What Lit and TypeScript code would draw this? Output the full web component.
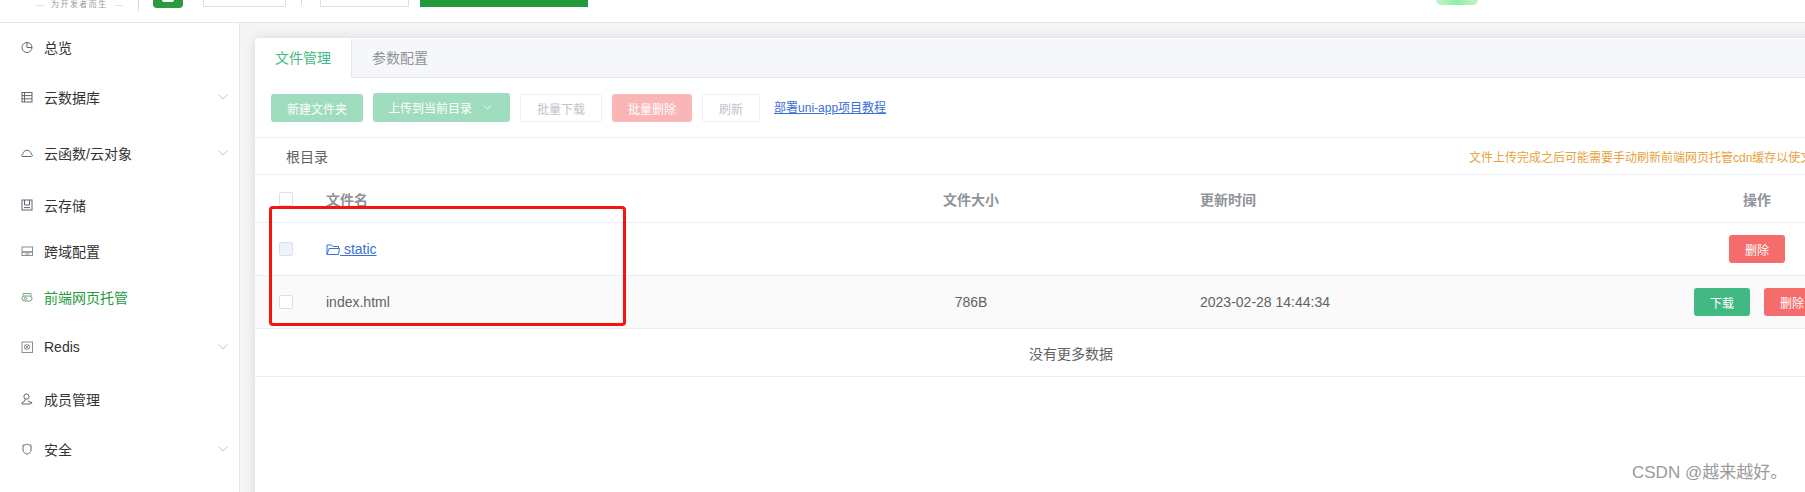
import { LitElement, html, css, svg } from "lit";
import { customElement } from "lit/decorators.js";

const S = (body: unknown) => html`<svg class="ic" viewBox="0 0 12 12" fill="none" stroke="currentColor" stroke-width="1">${body}</svg>`;
const icons: Record<string, unknown> = {
  clock: S(svg`<circle cx="6" cy="6.5" r="5"/><path d="M6 1.5V6.5H11"/>`),
  table: S(svg`<rect x="1" y="1.5" width="10" height="9.5"/><path d="M1 4.6H11M1 7.8H11M3.5 1.5V11"/>`),
  cloud: S(svg`<path d="M1.5 9.5C.2 9.5.3 7.6 1.6 7.4 2 5 4 3.2 6 3.2S10 5 10.4 7.4C11.7 7.6 11.8 9.5 10.5 9.5Z"/>`),
  disk: S(svg`<rect x="1" y="1" width="10" height="10"/><path d="M3.5 1V6H8.5V1M3 8.6H9"/>`),
  card: S(svg`<rect x="1" y="2" width="10.5" height="8.5" stroke="#8a8d93"/><path d="M1 7H11.5" stroke="#8a8d93" stroke-width="1.6"/><path d="M4 9H8.5" stroke="#8a8d93"/>`),
  host: S(svg`<path d="M2 5V2.5H10V5" stroke="#7fae8c"/><rect x="1" y="5" width="10" height="5" rx="2.5" stroke="#6d9c7c"/><circle cx="4.5" cy="7.5" r="1.2" stroke="#6d9c7c"/>`),
  redis: S(svg`<rect x="1" y="1" width="10.5" height="10.5" stroke="#8a8d93"/><path d="M3.8 4L8 8M8 4L3.8 8" stroke="#8a8d93"/><ellipse cx="6" cy="6" rx="2.8" ry="2.3" stroke="#8a8d93"/>`),
  user: S(svg`<circle cx="5.5" cy="3.6" r="2.6"/><path d="M4.2 6.2 3.8 8 1 9.6V11H9M7 8 9 9M10 8.5V11M8.8 9.8H11.2"/>`),
  shield: S(svg`<path d="M2 2.2C4 2.2 5 1.6 6 1 7 1.6 8 2.2 10 2.2V7C10 9.2 7.8 10.6 6 11.2 4.2 10.6 2 9.2 2 7Z"/>`),
};

const chevron = (cls = "chev") => html`<svg class=${cls} viewBox="0 0 10 6" fill="none" stroke="currentColor" stroke-width="1"><path d="M.5 .5 5 5 9.5 .5"/></svg>`;

const nav = [
  { t: "总览", i: "clock", h: 48 },
  { t: "云数据库", i: "table", h: 52, c: 1 },
  { t: "云函数/云对象", i: "cloud", h: 60, c: 1 },
  { t: "云存储", i: "disk", h: 44 },
  { t: "跨域配置", i: "card", h: 48 },
  { t: "前端网页托管", i: "host", h: 44, a: 1 },
  { t: "Redis", i: "redis", h: 56, c: 1 },
  { t: "成员管理", i: "user", h: 48 },
  { t: "安全", i: "shield", h: 52, c: 1 },
];

@customElement("app-root")
export class AppRoot extends LitElement {
  static styles = css`
    :host { display: block; width: 1805px; height: 492px; overflow: hidden; position: relative; background: #fff;
      font-family: "Liberation Sans", "Noto Sans CJK SC", sans-serif; font-size: 14px; color: #606266; }
    * { box-sizing: border-box; }
    .top { height: 23px; border-bottom: 1px solid #e7e7e7; display: flex; align-items: flex-start; overflow: hidden; background: #fff; }
    .tag { width: 138px; height: 10px; display: flex; align-items: center; justify-content: flex-start; padding-left: 36px; gap: 7px; font-size: 8px; letter-spacing: 1.45px; color: #999; line-height: 10px; white-space: nowrap; }
    .tag i { display: block; width: 8px; height: 1px; background: #e2e2e2; }
    .vline { width: 1px; height: 11px; background: #d8d8d8; flex: none; }
    .vline.short { height: 5px; margin-left: 15px; }
    .logo { width: 30px; height: 8px; margin-left: 14px; background: #2a9a3e; border-radius: 0 0 4px 4px; display: flex; justify-content: center; flex: none; }
    .logo b { display: block; width: 12px; height: 2px; background: #fff; border-radius: 0 0 2px 2px; }
    .inp { height: 7px; border: 1px solid #dcdfe6; border-top: 0; background: #fff; flex: none; }
    .inp.a { width: 83px; margin-left: 20px; }
    .inp.b { width: 89px; margin-left: 18px; }
    .gbar { width: 168px; height: 7px; margin-left: 11px; background: #239a3b; flex: none; }
    .blob { width: 42px; height: 5px; margin-left: 848px; border-radius: 0 0 21px 21px; background: linear-gradient(90deg, #c4f3cd, #8ff0a0 50%, #c4f3cd); flex: none; }
    .body { display: flex; height: 469px; }
    .side { width: 240px; flex: none; border-right: 1px solid #e6e6e6; background: #fff; position: relative; z-index: 1; }
    .item { display: flex; align-items: center; padding-left: 21px; color: #333; position: relative; }
    .item.on { color: #239a3b; }
    .ic { width: 12px; height: 12px; margin-right: 11px; color: #5f6670; flex: none; margin-top: -1px; }
    .chev { width: 10px; height: 6px; position: absolute; left: 218px; top: 50%; margin-top: -3px; color: #c0c4cc; }
    .main { flex: 1; min-width: 0; background: #f5f5f5; padding: 15px; overflow: hidden; }
    .card { width: 1632px; height: 600px; background: #fff; border-radius: 4px 4px 0 0; box-shadow: 0 0 12px rgba(0,0,0,.12); padding-top: 1px; }
    .tabs { display: flex; height: 39px; background: #f5f7fa; border-bottom: 1px solid #e4e7ed; border-radius: 4px 0 0 0; }
    .tab { padding: 0 20px; line-height: 38px; color: #909399; }
    .tab.on { background: #fff; color: #42b983; border-right: 1px solid #e4e7ed; height: 39px; width: 97px; }
    .tools { height: 60px; border-bottom: 1px solid #ebeef5; display: flex; align-items: flex-start; padding: 16px 0 0 16px; gap: 10px; }
    .btn { height: 28px; padding: 0 16px; border-radius: 3px; font-size: 12px; display: flex; align-items: center; justify-content: center; white-space: nowrap; flex: none; color: #fff; }
    .btn.lg { background: #a0dcbe; }
    .btn.up { margin-top: -1px; height: 29px; width: 137px; justify-content: flex-start; padding: 0 15px; background: #a0dcbe; }
    .btn.up svg { width: 9px; height: 5px; margin-left: 11px; color: #fff; }
    .btn.dis { border: 1px solid #ebeef5; color: #c0c4cc; background: #fff; }
    .btn.lr { background: #fab6b6; }
    .doc { font-size: 12px; color: #3a6fd8; text-decoration: underline; margin-left: 4px; line-height: 28px; white-space: nowrap; }
    .crumb { height: 37px; border-bottom: 1px solid #ebeef5; display: flex; align-items: center; padding-left: 31px; }
    .tip { font-size: 12px; color: #e6a23c; margin-left: 1141px; white-space: nowrap; }
    .row { display: grid; grid-template-columns: 71px 416px 458px 427px 260px; align-items: center; border-bottom: 1px solid #ebeef5; }
    .row.head { height: 48px; font-weight: 700; color: #909399; }
    .row.r { height: 53px; }
    .row.alt { background: #fafafa; }
    .cb { width: 14px; height: 14px; margin-left: 24px; border: 1px solid #dcdfe6; border-radius: 2px; background: #fff; }
    .cb.off { background: #edf2fc; }
    .ctr { text-align: center; }
    .ops { display: flex; justify-content: center; gap: 14px; }
    .op { height: 28px; width: 56px; padding: 0; }
    .op.g { background: #42b983; }
    .op.d { background: #f56c6c; }
    .file { color: #3a6fd8; display: flex; align-items: center; }
    .file svg { width: 14px; height: 13px; flex: none; }
    .file u { white-space: pre; }
    .more { height: 48px; border-bottom: 1px solid #ebeef5; display: flex; align-items: center; justify-content: center; }
    .mark { position: absolute; left: 269px; top: 206px; width: 357px; height: 120px; border: 3px solid #f5150f; border-radius: 4px; pointer-events: none; }
    .wm { position: absolute; left: 1632px; top: 462px; font-size: 17px; line-height: 22px; color: #9a9a9a; white-space: nowrap; }
  `;

  render() {
    return html`
      <div class="top">
        <div class="tag"><i></i><span>为开发者而生</span><i></i></div>
        <div class="vline"></div>
        <div class="logo"><b></b></div>
        <div class="inp a"></div>
        <div class="vline short"></div>
        <div class="inp b"></div>
        <div class="gbar"></div>
        <div class="blob"></div>
      </div>
      <div class="body">
        <nav class="side">
          ${nav.map((n) => html`<div class="item ${n.a ? "on" : ""}" style="height:${n.h}px">${icons[n.i]}<span>${n.t}</span>${n.c ? chevron() : ""}</div>`)}
        </nav>
        <main class="main">
          <section class="card">
            <div class="tabs"><div class="tab on">文件管理</div><div class="tab">参数配置</div></div>
            <div class="tools">
              <div class="btn lg">新建文件夹</div>
              <div class="btn up">上传到当前目录${chevron("")}</div>
              <div class="btn dis">批量下载</div>
              <div class="btn lr">批量删除</div>
              <div class="btn dis">刷新</div>
              <a class="doc">部署uni-app项目教程</a>
            </div>
            <div class="crumb"><span>根目录</span><span class="tip">文件上传完成之后可能需要手动刷新前端网页托管cdn缓存以使文件生效</span></div>
            <div class="row head"><div class="cb"></div><div>文件名</div><div class="ctr">文件大小</div><div>更新时间</div><div class="ctr">操作</div></div>
            <div class="row r">
              <div class="cb off"></div>
              <div class="file"><svg viewBox="0 0 14 13" fill="none" stroke="currentColor" stroke-width="1"><path d="M1 11.5V2H5.5L7 3.5H12.5V5.5M1 11.5H12.5L13.5 5.5H3L1 11.5Z"/></svg><u> static</u></div>
              <div></div><div></div>
              <div class="ops"><div class="btn op d">删除</div></div>
            </div>
            <div class="row r alt">
              <div class="cb"></div>
              <div>index.html</div>
              <div class="ctr">786B</div>
              <div>2023-02-28 14:44:34</div>
              <div class="ops"><div class="btn op g">下载</div><div class="btn op d">删除</div></div>
            </div>
            <div class="more">没有更多数据</div>
          </section>
        </main>
      </div>
      <div class="mark"></div>
      <div class="wm">CSDN @越来越好。</div>
    `;
  }
}
